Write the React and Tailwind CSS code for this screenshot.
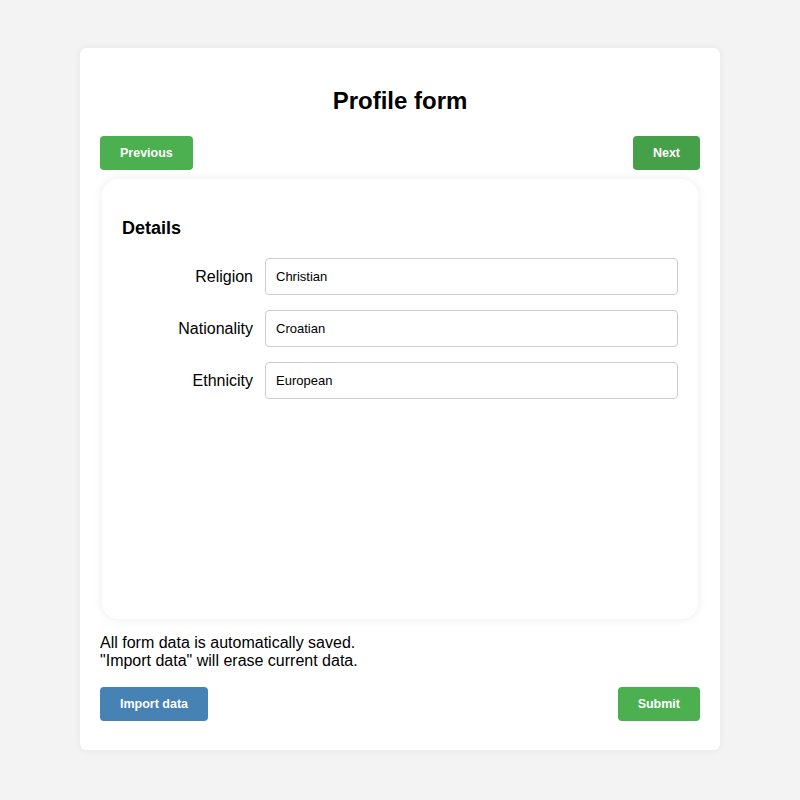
import React, { useState } from 'react';

const fields = [
    { label: 'Religion', value: 'Christian' },
    { label: 'Nationality', value: 'Croatian' },
    { label: 'Ethnicity', value: 'European' },
];

const App = () => {
    const [values, setValues] = useState(fields.map(f => f.value));

    return (
        <div className="min-h-screen bg-[#f3f3f3] pt-12 font-['Liberation_Sans',Arial,sans-serif] text-black">
            <div className="mx-auto w-[640px] rounded-md bg-white px-5 pt-[39px] pb-[29px] shadow-[0_0_8px_rgba(0,0,0,0.06)]">
                <h1 className="text-center text-2xl leading-7 font-bold">Profile form</h1>

                {/* Step navigation */}
                <div className="mt-[21px] flex justify-between">
                    <button className="h-[34px] rounded bg-[#4CAF50] px-5 pt-px text-[12.5px] font-bold text-white">Previous</button>
                    <button className="h-[34px] rounded bg-[#45a049] px-5 pt-px text-[12.5px] font-bold text-white">Next</button>
                </div>

                {/* Details panel */}
                <div className="mx-[2px] mt-[9px] h-[440px] rounded-2xl bg-white px-5 pt-[39px] shadow-[0_0_10px_rgba(0,0,0,0.08)]">
                    <h3 className="text-lg leading-[21px] font-bold">Details</h3>
                    <div className="mt-[19px] flex flex-col gap-[15px]">
                        {fields.map((field, i) => (
                            <div key={field.label} className="flex items-center gap-3">
                                <label className="w-[131px] text-right text-base">{field.label}</label>
                                <input
                                    type="text"
                                    className="h-[37px] flex-1 rounded border border-[#cccccc] px-[10px] text-[13px] outline-none"
                                    value={values[i]}
                                    onChange={(e) => setValues(values.map((v, j) => (j === i ? e.target.value : v)))}
                                />
                            </div>
                        ))}
                    </div>
                </div>

                <p className="mt-[15px] text-base leading-[18px]">
                    All form data is automatically saved.
                    <br />
                    "Import data" will erase current data.
                </p>

                <div className="mt-[17px] flex justify-between">
                    <button className="h-[34px] rounded bg-[#4682B4] px-5 pt-px text-[12.5px] font-bold text-white">Import data</button>
                    <button className="h-[34px] rounded bg-[#4CAF50] px-5 pt-px text-[12.5px] font-bold text-white">Submit</button>
                </div>
            </div>
        </div>
    );
};

export default App;
